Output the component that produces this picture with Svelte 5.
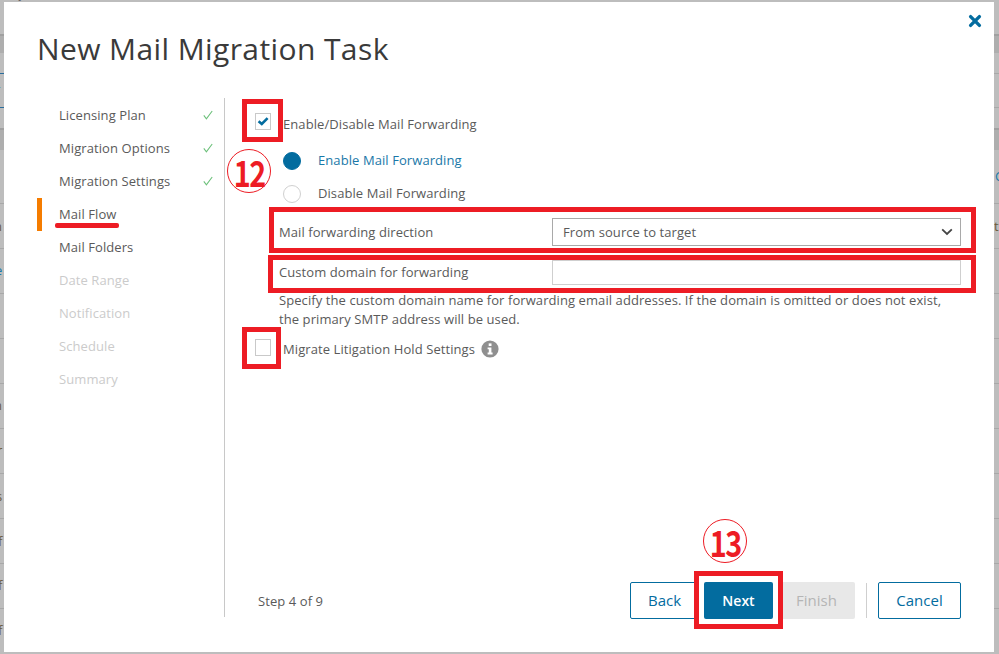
<script>
  const steps = [
    { label: 'Licensing Plan', state: 'done' },
    { label: 'Migration Options', state: 'done' },
    { label: 'Migration Settings', state: 'done' },
    { label: 'Mail Flow', state: 'active' },
    { label: 'Mail Folders', state: 'todo' },
    { label: 'Date Range', state: 'off' },
    { label: 'Notification', state: 'off' },
    { label: 'Schedule', state: 'off' },
    { label: 'Summary', state: 'off' }
  ];
  const rowLines = [203, 248, 293, 338, 383, 428, 473, 518, 563, 608];
  const slivers = [
    { top: 80, left: -5, ch: 'r', cls: 'blue' },
    { top: 217, left: -6, ch: 'n', cls: '' },
    { top: 261, left: -5, ch: 'e', cls: 'blue' },
    { top: 396, left: -6, ch: 'n', cls: '' },
    { top: 441, left: -3, ch: 'r', cls: '' },
    { top: 487, left: -4, ch: 's', cls: '' },
    { top: 532, left: -2, ch: 'f', cls: '' },
    { top: 576, left: -2, ch: 'f', cls: '' },
    { top: 621, left: -2, ch: 'f', cls: '' },
    { top: 167, left: 995, ch: 'C', cls: 'blue' },
    { top: 217, left: 994, ch: 't', cls: '' }
  ];
</script>

<div class="page">
  <div class="backdrop">
    <div class="tabs"><span>QUEUES</span><span class="cur">MAILBOXES</span><span>ONEDRIVE</span><span>DESKTOP AGENTS</span><span>EVENTS</span><span>TASKS</span></div>
    <i class="band b1"></i>
    <i class="band b2"></i>
    <i class="bluel l1"></i>
    <i class="bluel l2"></i>
    {#each rowLines as y}
      <i class="rowline" style="top:{y}px"></i>
    {/each}
    {#each slivers as s}
      <span class="sliver {s.cls}" style="top:{s.top}px;left:{s.left}px">{s.ch}</span>
    {/each}
  </div>

  <div class="modal">
    <button class="close" aria-label="Close">
      <svg viewBox="0 0 14 14" width="14" height="14"><path d="M2.6 2.6 L11.4 11.4 M11.4 2.6 L2.6 11.4" stroke="#036c9f" stroke-width="3.4" stroke-linecap="round" /></svg>
    </button>
    <h1>New Mail Migration Task</h1>

    <div class="body">
      <nav class="steps">
        {#each steps as s}
          <div class="step {s.state}">
            <span>{s.label}</span>
            {#if s.state === 'done'}
              <svg class="tick" viewBox="0 0 10 10" width="10" height="10"><path d="M0.8 5.4 L3.4 8.8 L9.2 1" fill="none" stroke="#6cc07a" stroke-width="1.1" /></svg>
            {/if}
          </div>
        {/each}
      </nav>

      <section class="form">
        <div class="check-row first">
          <span class="box">
            <svg viewBox="0 0 14 14" width="14" height="14"><path d="M2.6 7.2 L5.8 10 L11.6 4.2" fill="none" stroke="#036c9f" stroke-width="2.6" /></svg>
          </span>
          <span class="check-label">Enable/Disable Mail Forwarding</span>
        </div>

        <div class="radio-row on top"><span class="radio"></span><span class="rl">Enable Mail Forwarding</span></div>
        <div class="radio-row"><span class="radio"></span><span class="rl">Disable Mail Forwarding</span></div>

        <div class="field">
          <label for="dir">Mail forwarding direction</label>
          <div class="select" id="dir">
            <span>From source to target</span>
            <svg viewBox="0 0 12 8" width="12" height="8"><path d="M1.2 1.4 L6 6 L10.8 1.4" fill="none" stroke="#444" stroke-width="1.8" /></svg>
          </div>
        </div>
        <div class="field second">
          <label for="dom">Custom domain for forwarding</label>
          <input id="dom" type="text" />
        </div>
        <p class="hint">Specify the custom domain name for forwarding email addresses. If the domain is omitted or does not exist, the primary SMTP address will be used.</p>

        <div class="check-row last">
          <span class="box"></span>
          <span class="check-label">Migrate Litigation Hold Settings</span>
          <svg class="info" viewBox="0 0 18 18" width="18" height="18"><circle cx="9" cy="9" r="8.6" fill="#8f8f8f" /><rect x="7.7" y="3.4" width="2.8" height="2.6" fill="#fff" /><path d="M6.6 7.4 H10.4 V12.6 H11.6 V14.4 H6.6 V12.6 H7.8 V9.2 H6.6 Z" fill="#fff" /></svg>
        </div>
      </section>
    </div>

    <footer>
      <span class="count">Step 4 of 9</span>
      <div class="actions">
        <button class="btn outline">Back</button>
        <button class="btn primary">Next</button>
        <button class="btn disabled">Finish</button>
        <span class="sep"></span>
        <button class="btn outline cancel">Cancel</button>
      </div>
    </footer>
  </div>

  <!-- red annotations laid over the screenshot -->
  <i class="mark" style="left:242px;top:99px;width:41px;height:43px"></i>
  <i class="mark" style="left:269px;top:207px;width:707px;height:46px"></i>
  <i class="mark" style="left:268px;top:255px;width:708px;height:38px"></i>
  <i class="mark" style="left:242px;top:327px;width:39px;height:42px"></i>
  <i class="mark" style="left:694px;top:571px;width:89px;height:58px"></i>
  <i class="underline"></i>
  <span class="num" style="left:227px;top:149px"><span class="digits">12</span></span>
  <span class="num" style="left:703px;top:519px"><span class="digits">13</span></span>
</div>

<style>
  :global(body) { margin: 0; }
  .page {
    position: relative;
    width: 999px;
    height: 654px;
    overflow: hidden;
    background: #bdbdbd;
    font-family: "Open Sans", "Noto Sans", sans-serif;
    font-size: 13px;
    letter-spacing: 0.08px;
    color: #5a5a5a;
  }
  .backdrop { position: absolute; inset: 0; }
  .tabs {
    display: flex;
    margin-top: -15px;
    padding-left: 12px;
    gap: 44px;
    font-size: 13px;
    font-weight: 600;
    letter-spacing: 1px;
    color: #666;
    white-space: nowrap;
  }
  .tabs .cur { color: #0b4f78; font-weight: 700; }
  .band { position: absolute; left: 0; right: 0; background: #aeaeae; }
  .b1 { top: 34px; height: 19px; border-top: 2px solid #a0a0a0; box-sizing: border-box; }
  .b2 { top: 128px; height: 22px; border-top: 2px solid #a0a0a0; box-sizing: border-box; }
  .bluel { position: absolute; left: 0; right: 0; height: 1px; background: #a8a8a8; }
  .l1 { top: 73px; }
  .l2 { top: 107px; }
  .bluel::before { content: ""; position: absolute; left: 0; width: 4px; top: 0; height: 1px; background: #2a6d9c; }
  .rowline { position: absolute; left: 0; right: 0; height: 1px; background: #a8a8a8; }
  .sliver { position: absolute; font-size: 13px; line-height: 18px; color: #6b5a3c; }
  .sliver.blue { color: #1a78a8; }
  .modal {
    position: absolute;
    left: 4px;
    top: 2px;
    width: 990px;
    height: 650px;
    box-sizing: border-box;
    background: #fff;
    display: flex;
    flex-direction: column;
  }
  .close {
    position: absolute;
    top: 12px;
    right: 12px;
    width: 14px;
    height: 14px;
    padding: 0;
    border: 0;
    background: none;
    display: block;
  }
  .close svg { display: block; }
  h1 {
    margin: 26px 0 0 33px;
    font-size: 30px;
    line-height: 41px;
    letter-spacing: 0.4px;
    font-weight: 400;
    color: #3a3a3a;
  }
  .body {
    display: flex;
    margin: 29px 0 0 33px;
    height: 519px;
  }
  .steps {
    width: 188px;
    flex: none;
    box-sizing: border-box;
    border-right: 1px solid #c8c8c8;
    padding-top: 1px;
  }
  .step {
    height: 33px;
    display: flex;
    align-items: center;
    justify-content: space-between;
    padding: 0 11px 1px 17px;
    box-sizing: border-box;
    border-left: 5px solid transparent;
  }
  .step.active { border-left-color: #f57c00; }
  .step.off { color: #cbcbcb; }
  .form { flex: 1; padding-left: 30px; }
  .check-row { display: flex; align-items: center; }
  .check-row.first { height: 24px; margin-top: 11px; }
  .box {
    width: 16px;
    height: 17px;
    box-sizing: border-box;
    border: 1px solid #c9c9c9;
    display: flex;
    align-items: center;
    justify-content: center;
    flex: none;
  }
  .check-label { margin-left: 12px; position: relative; top: 2px; }
  .first .check-label { top: 3px; }
  .radio-row {
    height: 33px;
    display: flex;
    align-items: center;
    margin-left: 28px;
    gap: 17px;
  }
  .radio-row.top { margin-top: 11px; }
  .rl { padding-bottom: 2px; }
  .radio {
    width: 18px;
    height: 18px;
    box-sizing: border-box;
    border: 1px solid #d0d0d0;
    border-radius: 50%;
    flex: none;
  }
  .on { color: #1a78a8; }
  .on .radio { background: #036c9f; border-color: #036c9f; }
  .field {
    display: flex;
    align-items: center;
    margin-left: 24px;
    margin-right: 33px;
    margin-top: 8px;
    height: 28px;
  }
  .field.second { margin-top: 14px; height: 25px; }
  .field label { width: 273px; flex: none; }
  .field.second label { padding-bottom: 2px; }
  .select {
    flex: 1;
    height: 28px;
    box-sizing: border-box;
    border: 1px solid #a9a9a9;
    display: flex;
    align-items: center;
    justify-content: space-between;
    padding: 0 7px 0 10px;
  }
  input {
    flex: 1;
    height: 25px;
    box-sizing: border-box;
    border: 1px solid #cfcfcf;
    outline: none;
    min-width: 0;
  }
  .hint {
    margin: 6px 33px 0 24px;
    line-height: 19px;
    font-size: 13px;
  }
  .check-row.last { margin-top: 6px; height: 24px; }
  .info { margin-left: 6px; position: relative; top: 2px; }
  footer {
    position: absolute;
    left: 254px;
    right: 33px;
    bottom: 33px;
    height: 37px;
    display: flex;
    align-items: center;
    justify-content: space-between;
  }
  .actions { display: flex; align-items: center; }
  .btn {
    height: 37px;
    width: 69px;
    box-sizing: border-box;
    border-radius: 2px;
    font: inherit;
    font-size: 15px;
    letter-spacing: 0;
    padding: 0 0 2px;
    border: 1px solid transparent;
  }
  .outline { background: #fff; border-color: #036c9f; color: #036c9f; }
  .primary { background: #036c9f; color: #fff; font-weight: 600; font-size: 14px; margin-left: 5px; padding: 0; }
  .disabled { background: #e8e8e8; color: #b5b5b5; margin-left: 5px; width: 77px; }
  .sep { width: 1px; height: 35px; background: #cfcfcf; margin: 0 11px; }
  .cancel { width: 83px; }
  .mark {
    position: absolute;
    box-sizing: border-box;
    border: 5px solid #ed1c24;
  }
  .underline {
    position: absolute;
    left: 55px;
    top: 223px;
    width: 64px;
    height: 5px;
    border-radius: 2px;
    background: #ed1c24;
  }
  .num {
    position: absolute;
    box-sizing: border-box;
    width: 44px;
    height: 44px;
    border: 1.5px solid #ed1c24;
    border-radius: 50%;
    display: flex;
    align-items: center;
    justify-content: center;
    font-family: "Noto Sans CJK JP", sans-serif;
    font-size: 36px;
    line-height: 1;
    letter-spacing: -2px;
    font-weight: 700;
    color: #ed1c24;
  }
  .digits { display: inline-block; transform: scaleX(0.8); }
</style>
